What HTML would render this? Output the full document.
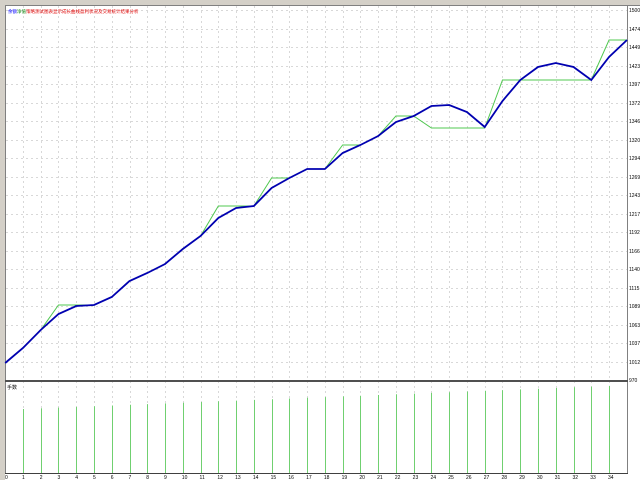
<!DOCTYPE html><html><head><style>body{margin:0;background:#fff;width:640px;height:480px;overflow:hidden;font-family:"Liberation Sans","Noto Sans CJK SC",sans-serif}</style></head><body>
<svg width="640" height="480" xmlns="http://www.w3.org/2000/svg" style="position:absolute;left:0;top:0">
<rect x="0" y="0" width="5" height="480" fill="#d4d0c8"/>
<rect x="0" y="0" width="640" height="5" fill="#d4d0c8"/>
<line x1="5" y1="5.5" x2="640" y2="5.5" stroke="#808080"/>
<line x1="5.5" y1="5" x2="5.5" y2="474" stroke="#808080"/>
<g stroke="#d8d8d8" stroke-dasharray="2,3" id="g"></g>
<line x1="627.5" y1="5" x2="627.5" y2="474" stroke="#808080"/>
<rect x="5" y="380" width="623" height="2" fill="#505050"/>
<line x1="5" y1="473.5" x2="628" y2="473.5" stroke="#404040"/>
<polyline id="gr" fill="none" stroke="#50c850" stroke-width="1"/>
<polyline id="bl" fill="none" stroke="#0000b0" stroke-width="1.8"/>
<g id="bars" stroke="#70d070" stroke-width="1"></g>
<g id="lab" font-size="5" fill="#000"></g>
<text x="8" y="13" font-size="4.5" fill="#0000ff">余额</text><text x="17" y="13" font-size="4.5" fill="#008000">净值</text><text x="26" y="13" font-size="4.5" fill="#e00000">策略测试图表显示成长曲线盈利状况及交易统计结果分析</text>
<text x="7" y="389" font-size="5">手数</text>
</svg>
<script>
var ns="http://www.w3.org/2000/svg";function X(i){return 5.2+17.76*i}
function el(p,t,a){var e=document.createElementNS(ns,t);for(var k in a)e.setAttribute(k,a[k]);document.getElementById(p).appendChild(e);return e}
for(var y=10;y<380;y+=18.5)el('g','line',{x1:6,x2:627,y1:Math.round(y)+.5,y2:Math.round(y)+.5});
for(var i=1;i<35;i++){var x=Math.round(X(i))+.5;el('g','line',{x1:x,x2:x,y1:6,y2:473});}
var b=[363,348,330,314,306,305,297,281,273,264,249,236,218,208,206,188,178,169,169,153,145,136,122,116,106,105,112,127,101,80,67,63,67,80,57];
var p=b.map(function(v,i){return X(i)+','+v});p.push('627,40');document.getElementById('bl').setAttribute('points',p.join(' '));
var g=[363,348,330,305,305,305,297,281,273,264,249,236,206,206,206,178,178,169,169,145,145,136,116,116,128,128,128,128,80,80,80,80,80,80,40];
var q=g.map(function(v,i){return X(i)+','+v});q.push('627,40');document.getElementById('gr').setAttribute('points',q.join(' '));
for(var i=1;i<35;i++){var x=Math.round(X(i))+.5,t=409-(i-1)*0.7;el('bars','line',{x1:x,x2:x,y1:t,y2:473});
var tx=el('lab','text',{x:X(i)-1,y:479});tx.textContent=i;}
var t0=el('lab','text',{x:5,y:479});t0.textContent='0';
for(var k=0;k<21;k++){var y=Math.round(10+18.5*k);var t=el('lab','text',{x:629,y:y+2});t.textContent=k==20?'970':Math.round(1500-k*25.7);}
</script></body></html>
